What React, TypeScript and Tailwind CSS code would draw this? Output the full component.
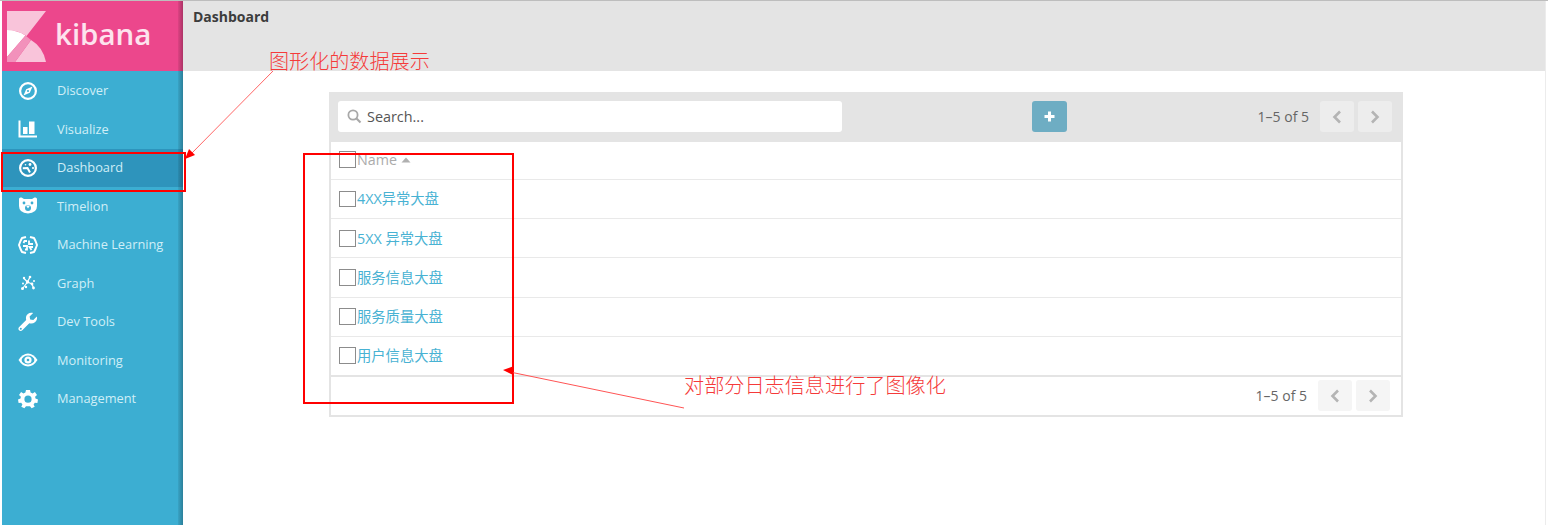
import React from "react";

const I = ({ children }: { children: React.ReactNode }) => (
  <svg width="20" height="20" viewBox="0 0 20 20" fill="none" className="shrink-0">{children}</svg>
);

const icons: Record<string, React.ReactNode> = {
  Discover: (
    <I>
      <circle cx="10" cy="10" r="7.9" stroke="white" strokeWidth="2.2" />
      <path d="M14.500 5.500 L11.800 11.800 L5.500 14.500 L8.200 8.200 Z" fill="white" />
      <circle cx="10" cy="10" r="1.100" fill="#3caed2" />
    </I>
  ),
  Visualize: (
    <I>
      <path d="M1.500 1.500 V17.500 H19" stroke="white" strokeWidth="2" />
      <rect x="5" y="8" width="4.500" height="7" fill="white" />
      <rect x="11" y="2.500" width="5.500" height="12.500" fill="white" />
    </I>
  ),
  Dashboard: (
    <I>
      <circle cx="10" cy="10" r="7.900" stroke="white" strokeWidth="2.200" />
      <path d="M4.800 10.200 L9.500 10 L12 14.500" stroke="white" strokeWidth="2" />
      <circle cx="12" cy="6.500" r="1.400" fill="white" />
      <circle cx="15" cy="10" r="1.100" fill="white" />
      <circle cx="7.500" cy="6.800" r="0.800" fill="white" />
    </I>
  ),
  Timelion: (
    <I>
      <path d="M1 3 Q1 1 3.500 1.500 L6 3 H14 L16.500 1.500 Q19 1 19 3 V10 Q19 17 10 17.500 Q1 17 1 10 Z" fill="white" />
      <circle cx="6" cy="7" r="1.400" fill="#3caed2" />
      <circle cx="14" cy="7" r="1.400" fill="#3caed2" />
      <circle cx="10" cy="12" r="3" fill="#3caed2" />
      <path d="M8 9.500 H12 L10 12.500 Z" fill="white" />
    </I>
  ),
  "Machine Learning": (
    <I>
      <path d="M8 2 L4 3 L2.500 6 L1 10 L2.500 14 L4 17 L8 18 M12 2 L16 3 L17.500 6 L19 10 L17.500 14 L16 17 L12 18" stroke="white" strokeWidth="2" strokeLinejoin="round" />
      <path d="M9 6 H6.500 L5.500 8 M5 11 H9 V14.500 H7 M11 5.500 V9 H15 M15 12 H11.500 L13.500 15" stroke="white" strokeWidth="1.800" />
    </I>
  ),
  Graph: (
    <I>
      <path d="M9.500 9 L12 4 M9.500 9 L6 5.500 M9.500 9 L14 11 M9.500 9 L5 15 M14 11 L15.500 15" stroke="white" strokeWidth="1.200" />
      <circle cx="9.500" cy="9" r="1.700" fill="white" />
      <circle cx="12" cy="4" r="1.300" fill="white" />
      <circle cx="6" cy="5" r="1.200" fill="white" />
      <circle cx="14" cy="11" r="1.400" fill="white" />
      <circle cx="16" cy="8" r="1" fill="white" />
      <circle cx="4.500" cy="15.500" r="1.500" fill="white" />
      <circle cx="8" cy="14" r="1.200" fill="white" />
      <circle cx="15.500" cy="15" r="1.400" fill="white" />
      <circle cx="5" cy="10.500" r="1" fill="white" />
    </I>
  ),
  "Dev Tools": (
    <I>
      <path d="M18.800 4.600 L15.300 8 L12.200 7.400 L11.600 4.400 L15.100 1 C12 0 8.600 1.600 8 5 C7.800 6 8 7 8.200 7.900 L1.200 15 C0.200 16 0.200 17.200 1 18.200 C2 19.200 3.400 19.200 4.300 18.200 L11.300 11.200 C14.600 12.300 18.400 10.400 19 7 C19.200 6.200 19.100 5.300 18.800 4.600 Z" fill="white" />
      <circle cx="2.800" cy="16.700" r="1" fill="#3caed2" />
    </I>
  ),
  Monitoring: (
    <I>
      <path d="M0.500 10 Q4.500 3.500 10 3.500 Q15.500 3.500 19.500 10 Q15.500 16.500 10 16.500 Q4.500 16.500 0.500 10 Z" fill="white" />
      <ellipse cx="10" cy="10" rx="6.400" ry="4.400" fill="#3caed2" />
      <circle cx="10" cy="10" r="3.600" fill="white" />
      <circle cx="10" cy="10" r="1.300" fill="#3caed2" />
    </I>
  ),
  Management: (
    <I>
      <path fillRule="evenodd" clipRule="evenodd" d="M8 1 H12 L12.600 3.600 L14.600 4.400 L16.900 3 L19 5.900 L17.100 7.700 L17.500 9.600 L20 10.400 L19.400 13.900 L16.800 13.800 L15.600 15.400 L16.700 17.800 L13.600 19.300 L12 17.300 H8 L6.400 19.300 L3.300 17.800 L4.400 15.400 L3.200 13.800 L0.600 13.900 L0 10.400 L2.500 9.600 L2.900 7.700 L1 5.900 L3.100 3 L5.400 4.400 L7.400 3.600 Z M10 6.600 A3.600 3.600 0 1 0 10 13.800 A3.600 3.600 0 1 0 10 6.600 Z" fill="white" />
    </I>
  ),
};

const nav = ["Discover", "Visualize", "Dashboard", "Timelion", "Machine Learning", "Graph", "Dev Tools", "Monitoring", "Management"];
const rows = ["4XX异常大盘", "5XX 异常大盘", "服务信息大盘", "服务质量大盘", "用户信息大盘"];

const Chevron = ({ dir }: { dir: "l" | "r" }) => (
  <svg width="10" height="14" viewBox="0 0 10 14" fill="none">
    <path d={dir === "l" ? "M8 1.500 L2.500 7 L8 12.500" : "M2 1.500 L7.500 7 L2 12.500"} stroke="#b4b4b4" strokeWidth="2.600" />
  </svg>
);

const Pager = ({ light }: { light?: boolean }) => (
  <div className="flex items-center">
    <span className="text-[14px] text-[#666] mr-[11px]">1–5 of 5</span>
    <div className={`w-[34px] h-[31px] rounded-[3px] flex items-center justify-center mr-[4px] ${light ? "bg-[#f5f5f5]" : "bg-[#ededed]"}`}>
      <Chevron dir="l" />
    </div>
    <div className={`w-[34px] h-[31px] rounded-[3px] flex items-center justify-center ${light ? "bg-[#f5f5f5]" : "bg-[#ededed]"}`}>
      <Chevron dir="r" />
    </div>
  </div>
);

const Check = () => <div className="w-[16.500px] h-[16.500px] border border-[#8c8c8c] shrink-0 mr-[1.500px]" />;

const cjk = { fontFamily: '"Open Sans", "Noto Sans CJK SC", sans-serif' };

export default function App() {
  return (
    <div className="relative w-[1548px] h-[525px] overflow-hidden bg-white" style={cjk}>
      <div className="flex h-full border-t border-t-[#bdbdbd] pl-[2px] pr-[2px]">
        {/* sidebar */}
        <aside className="relative w-[181px] shrink-0 h-full bg-[#3caed2] flex flex-col">
          <div className="h-[70px] bg-[#ec478c] flex items-center pl-[5px] shrink-0">
            <svg width="40" height="51" viewBox="0 0 40 51" className="shrink-0">
              <path d="M0 0 H39 L19.500 25 Q11 19 0 19 Z" fill="#f9c4da" />
              <path d="M0 19 Q10 19 18.500 24.500 L0 46 Z" fill="white" />
              <path d="M24 29 Q36 36 39 51 H8 Z" fill="#f9c4da" />
              <path d="M18.500 24.500 L24 29 L8 51 H0 V46 Z" fill="#f291bb" />
            </svg>
            <span className="text-[#fde3ee] text-[29.500px] font-semibold ml-[8px] mt-[-4px]" style={{ fontFamily: '"Open Sans", sans-serif' }}>kibana</span>
          </div>
          <nav className="flex flex-col pt-[0.500px]">
            {nav.map((n) => (
              <div key={n} className={`h-[38.500px] flex items-center pl-[16px] ${n === "Dashboard" ? "bg-[#2e94bc]" : ""}`}>
                {icons[n]}
                <span className="ml-[19px] text-[12.800px] text-[#d0eef7] whitespace-nowrap">{n}</span>
              </div>
            ))}
          </nav>
          <div className="absolute right-0 top-0 bottom-0 w-[5px] bg-gradient-to-r from-[#00000010] to-[#00000045]" />
        </aside>

        {/* main */}
        <main className="flex-1 flex flex-col border-r border-r-[#ececec]">
          <header className="h-[70px] bg-[#e4e4e4] pl-[10px] pt-[5px] shrink-0">
            <h1 className="text-[14px] font-bold text-[#3c3c3c]">Dashboard</h1>
          </header>
          <section className="ml-[146px] mt-[21px] w-[1074px] border-2 border-t-0 border-[#e4e4e4] text-[14px]">
            <div className="h-[50px] -mx-[2px] bg-[#e4e4e4] flex items-center pl-[9px] pr-[11px] pb-px">
              <div className="w-[504px] h-[31px] bg-white rounded-[3px] flex items-center pl-[9px]">
                <svg width="15" height="15" viewBox="0 0 15 15" fill="none">
                  <circle cx="6" cy="6" r="4.600" stroke="#a8a8a8" strokeWidth="1.800" />
                  <path d="M9.500 9.500 L13.500 13.500" stroke="#a8a8a8" strokeWidth="2.200" />
                </svg>
                <span className="ml-[5px] text-[14.400px] text-[#555]">Search...</span>
              </div>
              <div className="ml-[190px] w-[35px] h-[31px] rounded-[3px] bg-[#6eadc3] flex items-center justify-center">
                <svg width="11" height="11" viewBox="0 0 11 11"><path d="M5.500 0.500 V10.500 M0.500 5.500 H10.500" stroke="white" strokeWidth="3" /></svg>
              </div>
              <div className="ml-auto"><Pager /></div>
            </div>
            <div className="h-[38px] flex items-center pl-[8px] pb-[2px] border-b border-b-[#e9e9e9]">
              <Check />
              <span className="text-[14.300px] text-[#ababab]">Name</span>
              <svg width="10" height="6" viewBox="0 0 10 6" className="ml-[4px]"><path d="M5 0.500 L9.500 5.500 H0.500 Z" fill="#b0b0b0" /></svg>
            </div>
            {rows.map((r, i) => (
              <div key={r} className={`flex items-center pl-[8px] ${i === 4 ? "h-[40px] pb-px border-b-2 border-b-[#e4e4e4]" : "h-[39.200px] border-b border-b-[#e9e9e9]"}`}>
                <Check />
                <span className="text-[14.300px] text-[#48b2d3]">{r}</span>
              </div>
            ))}
            <div className="h-[38.200px] flex items-center justify-end pr-[11px]"><Pager light /></div>
          </section>
        </main>
      </div>

      {/* annotations */}
      <div className="absolute left-[1px] top-[152px] w-[185px] h-[40px] border-2 border-[#f00]" />
      <div className="absolute left-[303px] top-[153px] w-[211px] h-[251px] border-2 border-[#f00]" />
      <span className="absolute left-[269px] top-[47px] text-[20.100px] leading-[28px] font-light text-[#f53a3a] whitespace-nowrap" style={{ fontFamily: '"Noto Sans CJK SC", sans-serif' }}>图形化的数据展示</span>
      <span className="absolute left-[684px] top-[371px] text-[20.150px] leading-[28px] font-light text-[#f53a3a] whitespace-nowrap" style={{ fontFamily: '"Noto Sans CJK SC", sans-serif' }}>对部分日志信息进行了图像化</span>
      <svg className="absolute left-0 top-0 pointer-events-none" width="1548" height="525">
        <path d="M273 71 L190 155" stroke="#f66" strokeWidth="1" />
        <path d="M185 159 L189 149 L195 155 Z" fill="#f00" />
        <path d="M684 408 L510 372" stroke="#f55" strokeWidth="1" />
        <path d="M503 370 L514 366 L513 375 Z" fill="#f00" />
      </svg>
    </div>
  );
}
